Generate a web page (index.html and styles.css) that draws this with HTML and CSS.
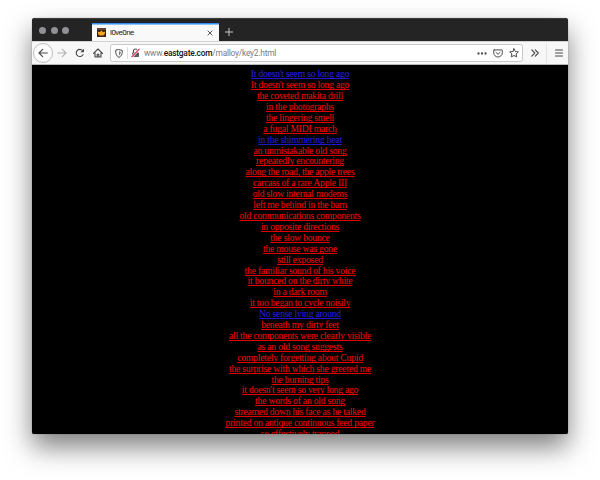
FILE: index.html
```html
<!DOCTYPE html>
<html lang="en">
<head>
<meta charset="utf-8">
<title>l0ve0ne</title>
<link rel="stylesheet" href="styles.css">
</head>
<body>
<div class="window">
  <div class="tabbar">
    <div class="lights"><i></i><i></i><i></i></div>
    <div class="tab">
      <svg class="favicon" width="9" height="9" viewBox="0 0 9 9"><rect width="9" height="9" fill="#38211c"/><path d="M0 0h9v2H0z" fill="#604438"/><path d="M.7 3.8 2.800 4 4.500 2.400 6 4l2.300-.2-.7 2.500-1.300 1.200H2.600L1.400 6.400z" fill="#f5a51b"/></svg>
      <span class="title">l0ve0ne</span>
      <svg class="close" width="6" height="6" viewBox="0 0 6 6"><path d="M.6.6l4.8 4.8M5.4.6.6 5.4" stroke="#444" stroke-width=".9"/></svg>
    </div>
    <svg class="plus" width="8" height="8" viewBox="0 0 8 8"><path d="M4 0v8M0 4h8" stroke="#c4c4c4" stroke-width="1"/></svg>
  </div>
  <div class="toolbar">
    <div class="back"><svg width="10" height="10" viewBox="0 0 10 10"><path d="M9.3 5H1M4.7 1.4 1 5l3.7 3.6" class="ln"/></svg></div>
    <svg class="fwd" width="10" height="10" viewBox="0 0 10 10"><path d="M.7 5H9M5.3 1.4 9 5 5.3 8.6" class="ln pale"/></svg>
    <svg class="reload" width="10" height="10" viewBox="0 0 10 10"><path d="M8 6.7A3.6 3.6 0 1 1 7.6 2.6" class="ln"/><path d="M9 .7v3.6H5.4z" fill="#4a4a4b"/></svg>
    <svg class="home" width="10" height="10" viewBox="0 0 10 10"><path d="M.5 5.3 5 1l4.5 4.3M2 4.6V9h6V4.6M4.2 9V6.2h1.6V9" class="ln"/></svg>
    <div class="urlbar">
      <svg class="shield" width="8" height="9" viewBox="0 0 8 9"><path d="M4 .6 7.3 1.5C7.4 5 6.5 7.200 4 8.400 1.500 7.200.6 5 .7 1.500z" class="ln thin"/><path d="M4 2.300v4.300C5.300 5.700 5.700 4.500 5.700 2.800z" fill="#777"/></svg>
      <i class="sep"></i>
      <svg class="lock" width="9" height="10" viewBox="0 0 9 10"><path d="M2.500 4.500V3a2 2 0 0 1 4 0v1.500" class="ln"/><rect x="1" y="4.500" width="7" height="4.500" rx=".7" fill="#5a5a5b"/><path d="M.5 9.200 8.500.8" stroke="#fff" stroke-width="2.300"/><path d="M.5 9.200 8.500.8" stroke="#e22850" stroke-width="1.200"/></svg>
      <span class="url">www.<b>eastgate.com</b>/malloy/key2.html</span>
      <svg class="dots" width="10" height="3" viewBox="0 0 10 3"><g fill="#4a4a4b"><circle cx="1.500" cy="1.500" r="1.150"/><circle cx="5" cy="1.500" r="1.150"/><circle cx="8.500" cy="1.500" r="1.150"/></g></svg>
      <svg class="pocket" width="10" height="9" viewBox="0 0 10 9"><path d="M1.200.9h7.600q.5 0 .5.500v2.300a4.300 4.300 0 0 1-8.600 0V1.400q0-.5.500-.5zM3 3.400l2 1.900 2-1.900" class="ln thin"/></svg>
      <svg class="star" width="10" height="10" viewBox="0 0 10 10"><path d="m5 .8 1.300 2.700 3 .4-2.200 2 .6 3L5 7.500 2.300 8.900l.6-3-2.200-2 3-.4z" class="ln thin"/></svg>
    </div>
    <svg class="more" width="8" height="8" viewBox="0 0 8 8"><path d="M.8.8 3.800 4l-3 3.200M4.300.8l3 3.200-3 3.200" class="ln"/></svg>
    <i class="divider"></i>
    <svg class="menu" width="8" height="8" viewBox="0 0 8 8"><path d="M.5 1h7M.5 4h7M.5 7h7" class="ln"/></svg>
  </div>
  <div class="page">
    <a class="new">It doesn't seem so long ago</a>
    <a>It doesn't seem so long ago</a>
    <a>the coveted makita drill</a>
    <a>in the photographs</a>
    <a>the lingering smell</a>
    <a>a fugal MIDI march</a>
    <a class="new">in the shimmering heat</a>
    <a>an unmistakable old song</a>
    <a>repeatedly encountering</a>
    <a>along the road, the apple trees</a>
    <a>carcass of a rare Apple III</a>
    <a>old slow internal modems</a>
    <a>left me behind in the barn</a>
    <a>old communications components</a>
    <a>in opposite directions</a>
    <a>the slow bounce</a>
    <a>the mouse was gone</a>
    <a>still exposed</a>
    <a>the familiar sound of his voice</a>
    <a>it bounced on the dirty white</a>
    <a>in a dark room</a>
    <a>it too began to cycle noisily</a>
    <a class="new">No sense lying around</a>
    <a>beneath my dirty feet</a>
    <a>all the components were clearly visible</a>
    <a>as an old song suggests</a>
    <a>completely forgetting about Cupid</a>
    <a>the surprise with which she greeted me</a>
    <a>the burning tips</a>
    <a>it doesn't seem so very long ago</a>
    <a>the words of an old song</a>
    <a>streamed down his face as he talked</a>
    <a>printed on antique continuous feed paper</a>
    <a>so effectively trapped</a>
  </div>
</div>
</body>
</html>
```
FILE: styles.css
```css
* { box-sizing: border-box; }
body { margin: 0; height: 480px; padding: 18px 32px 0; background: #fff; overflow: hidden; }
.window { height: 416px; border-radius: 3px 3px 2px 2px; background: #000; display: flex; flex-direction: column;
  box-shadow: 0 0 1px rgba(0,0,0,.65), 0 13px 27px rgba(0,0,0,.5); }
svg { display: block; flex: none; overflow: visible; }
.ln { fill: none; stroke: #4a4a4b; stroke-width: 1.15; stroke-linejoin: round; stroke-linecap: round; }
.thin { stroke-width: 1; }
.pale { stroke: #b4b4b5; }
.tabbar { height: 23px; flex: none; background: #242424; border-top: 1px solid #3b3b3b; border-radius: 3px 3px 0 0; display: flex; align-items: flex-end; }
.lights { width: 60px; height: 100%; display: flex; align-items: center; gap: 4.500px; padding: 1px 0 0 7px; }
.lights i { width: 7px; height: 7px; border-radius: 50%; background: #919196; }
.tab { width: 127px; height: 18px; background: linear-gradient(#338df0 1px, #8cc2f7 1px, #8cc2f7 2px, #f9f9fa 2px); display: flex; align-items: center; padding: 1px 6px 0 5px; }
.title { flex: 1; margin-left: 4px; font: 8px/12px Roboto, sans-serif; letter-spacing: -.55px; color: #1b1b1d; }
.plus { margin: 0 0 5px 6px; }
.toolbar { height: 24px; flex: none; background: #f7f7f8; border-top: 1px solid #d2d2d2; border-bottom: 1px solid #b5b9b8; display: flex; align-items: center; }
.back { width: 20px; height: 20px; margin-left: 1px; border: 1px solid #bdbdbe; border-radius: 50%; background: #fcfcfc; display: flex; align-items: center; justify-content: center; flex: none; }
.fwd { margin-left: 4px; }
.reload { margin-left: 8px; }
.home { margin-left: 8px; }
.urlbar { width: 413px; height: 18px; margin-left: 7px; border: 1px solid #c7c7c8; border-radius: 2.500px; background: #fff; display: flex; align-items: center; flex: none; }
.shield { margin-left: 4px; }
.sep { width: 1px; height: 12px; background: #dedede; margin-left: 4px; }
.lock { margin-left: 3px; }
.url { flex: 1; margin-left: 4px; font: 8.400px/14px Roboto, sans-serif; letter-spacing: -.23px; color: #7b7b7d; white-space: nowrap; }
.url b { font-weight: 500; color: #111; }
.pocket { margin-left: 6px; }
.star { margin: 0 3px 0 6px; }
.more { margin-left: 8px; }
.divider { width: 1px; height: 20px; margin-left: 7px; background: #e3e3e4; }
.menu { margin-left: 8px; }
.page { flex: 1; min-height: 0; overflow: hidden; padding-top: 4.200px; text-align: center; font: 9.600px/10.910px "Liberation Serif", serif; letter-spacing: -.2px; border-radius: 0 0 2px 2px; }
.page a { display: block; color: #f00; text-decoration: underline; text-decoration-color: #e00000; text-decoration-thickness: 1px; text-underline-offset: 1px; text-decoration-skip-ink: none; }
.page .new { color: #2a1fe6; text-decoration-color: #2018c8; }
```
